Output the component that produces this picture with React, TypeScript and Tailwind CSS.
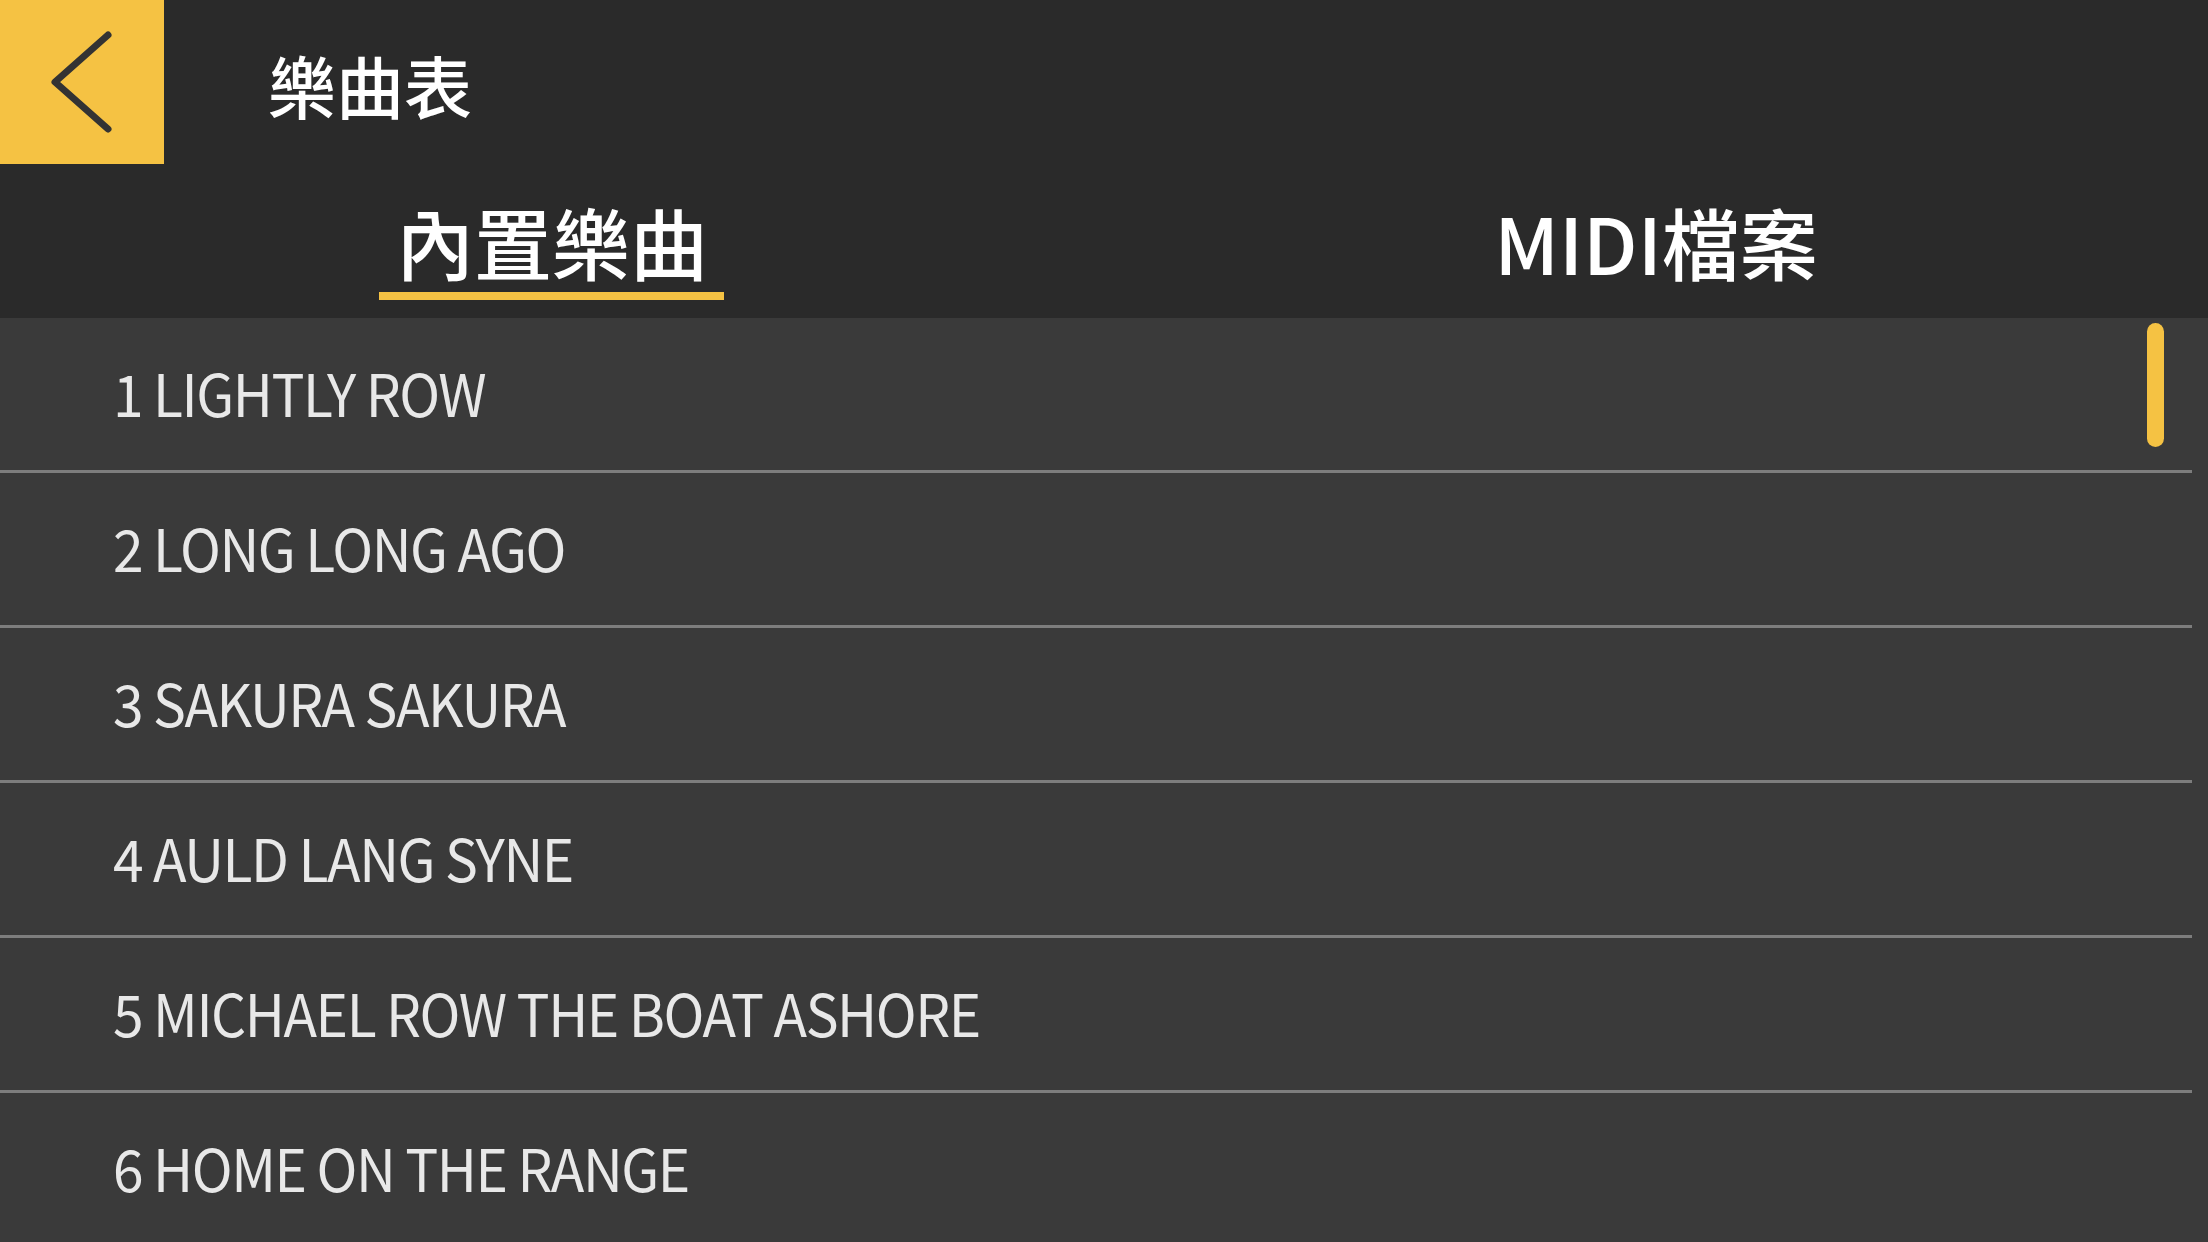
import React from 'react';

const songs = [
  '1 LIGHTLY ROW',
  '2 LONG LONG AGO',
  '3 SAKURA SAKURA',
  '4 AULD LANG SYNE',
  '5 MICHAEL ROW THE BOAT ASHORE',
  '6 HOME ON THE RANGE',
];

const font = { fontFamily: '"Noto Sans CJK TC", "Noto Sans", sans-serif' };

const App = () => {
  return (
    <div className="w-[2208px] h-[1242px] overflow-hidden bg-[#3a3a3a] flex flex-col" style={font}>
      {/* Top bar */}
      <div className="bg-[#2a2a2a] flex-none">
        <div className="h-[164px] flex items-center">
          <button className="w-[164px] h-[164px] bg-[#f5c243] flex items-center justify-center flex-none">
            <svg width="164" height="164" viewBox="0 0 164 164">
              <path d="M108 35 L55 82 L108 129" fill="none" stroke="#333333" strokeWidth="7" strokeLinecap="round" strokeLinejoin="round" />
            </svg>
          </button>
          <h1 className="ml-[104px] mt-[6px] text-white text-[68px] leading-none font-medium">樂曲表</h1>
        </div>
        {/* Tabs */}
        <div className="h-[154px] grid grid-cols-2">
          <div className="flex justify-center">
            <div className="relative flex flex-col items-center">
              <span className="mt-[38px] text-white text-[78px] leading-none font-medium">內置樂曲</span>
              <div className="absolute top-[128px] w-[345px] h-[8px] bg-[#f5c243]" />
            </div>
          </div>
          <div className="flex justify-center">
            <span className="mt-[38px] text-white text-[78px] leading-none font-medium">MIDI檔案</span>
          </div>
        </div>
      </div>

      {/* Song list */}
      <div className="relative flex-1">
        {songs.map((s) => (
          <div key={s} className="h-[155px] flex flex-col">
            <div className="h-[152px] flex items-center pl-[113px] pb-[5px]">
              <span className="text-[#e8e8e8] text-[58px] leading-none tracking-[-1.5px] scale-x-[0.95] origin-left whitespace-nowrap">{s}</span>
            </div>
            <div className="h-[3px] mr-[16px] bg-[#7d7d7d]" />
          </div>
        ))}
        <div className="absolute top-[5px] left-[2147px] w-[17px] h-[124px] rounded-full bg-[#f5c243]" />
      </div>
    </div>
  );
};

export default App;
